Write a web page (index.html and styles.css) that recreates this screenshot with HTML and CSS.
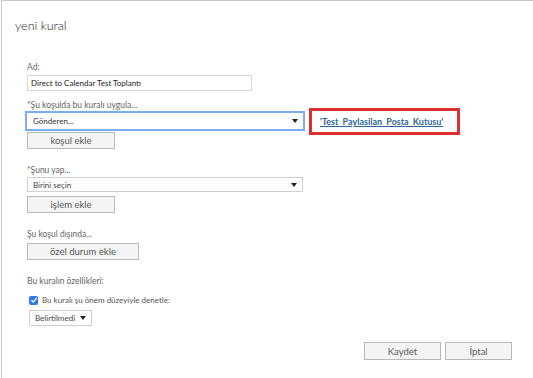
FILE: index.html
```html
<!DOCTYPE html>
<html lang="tr">
<head>
    <meta charset="UTF-8">
    <title>yeni kural</title>
    <link rel="stylesheet" href="styles.css">
</head>
<body>
    <div class="dialog">
        <h1 class="title">yeni kural</h1>

        <div class="form">
            <div class="field field-name">
                <label class="label">Ad:</label>
                <div class="input name-input">Direct to Calendar Test Toplantı</div>
            </div>

            <div class="field">
                <label class="label">*Şu koşulda bu kuralı uygula...</label>
                <div class="cond-row">
                    <div class="select select-focus">
                        <span>Gönderen...</span>
                        <span class="arrow"></span>
                    </div>
                    <div class="highlight">
                        <a class="link" href="#">'Test_Paylasilan_Posta_Kutusu'</a>
                    </div>
                </div>
                <button class="btn btn-small">koşul ekle</button>
            </div>

            <div class="field">
                <label class="label">*Şunu yap...</label>
                <div class="select select-wide">
                    <span>Birini seçin</span>
                    <span class="arrow"></span>
                </div>
                <button class="btn btn-small btn-gap">işlem ekle</button>
            </div>

            <div class="field">
                <label class="label">Şu koşul dışında...</label>
                <button class="btn btn-medium">özel durum ekle</button>
            </div>

            <div class="field">
                <label class="label">Bu kuralın özellikleri:</label>
                <label class="check">
                    <span class="checkbox">
                        <svg width="8" height="8" viewBox="0 0 8 8"><path d="M1.3 4.2 L3.2 6 L6.8 1.8" fill="none" stroke="#fff" stroke-width="1.3"/></svg>
                    </span>
                    Bu kuralı şu önem düzeyiyle denetle:
                </label>
                <div class="select select-small">
                    <span>Belirtilmedi</span>
                    <span class="arrow"></span>
                </div>
            </div>
        </div>

        <div class="footer">
            <button class="btn btn-footer">Kaydet</button>
            <button class="btn btn-footer btn-cancel">İptal</button>
        </div>
    </div>
</body>
</html>
```

FILE: styles.css
```css
* { margin: 0; padding: 0; box-sizing: border-box; }
body {
    font-family: Lato, "Open Sans", sans-serif;
    background: #ffffff;
    color: #333333;
    width: 533px;
    height: 378px;
    overflow: hidden;
}
.dialog {
    width: 532px;
    height: 378px;
    border-top: 1px solid #c6c6c6;
    border-left: 1px solid #c6c6c6;
    margin-left: 1px;
    padding: 15px 21px 22px 13px;
    display: flex;
    flex-direction: column;
}
.title {
    font-size: 12.5px;
    font-weight: 300;
    color: #222222;
    line-height: 20px;
}
.form {
    padding: 26px 0 0 12px;
}
.field {
    margin-bottom: 16px;
}
.field-name {
    margin-bottom: 9px;
}
.label {
    display: block;
    font-size: 8.5px;
    color: #666666;
    line-height: 11px;
    margin-bottom: 1px;
}
.field-name .label {
    margin-bottom: 2px;
}
.input {
    height: 16px;
    border: 1px solid #d6d6d6;
    font-size: 8px;
    line-height: 14px;
    padding-left: 3px;
    color: #222222;
}
.name-input {
    width: 225px;
}
.cond-row {
    display: flex;
    align-items: flex-start;
    margin-left: -2px;
    margin-top: -1px;
}
.select {
    display: flex;
    justify-content: space-between;
    align-items: center;
    height: 15px;
    border: 1px solid #d0d0d0;
    font-size: 8px;
    color: #444444;
    padding: 0 5px 0 5px;
}
.select-focus {
    width: 280px;
    height: 20px;
    border: 2px solid #7aaef0;
    padding-left: 6px;
    color: #333333;
}
.select-wide {
    width: 276px;
}
.select-small {
    width: 63px;
    height: 16px;
    margin: 5px 0 0 2px;
}
.arrow {
    width: 0;
    height: 0;
    border-left: 3px solid transparent;
    border-right: 3px solid transparent;
    border-top: 4px solid #222222;
}
.highlight {
    margin: -3px 0 -4px 4px;
    width: 151px;
    height: 27px;
    border: 3px solid #dc2f2f;
    display: flex;
    align-items: center;
    padding-left: 8px;
}
.link {
    font-size: 9px;
    font-weight: 700;
    color: #2c6894;
    text-decoration: underline;
}
.btn {
    display: block;
    height: 17px;
    background: #f4f4f4;
    border: 1px solid #b9b9b9;
    font-family: inherit;
    font-size: 9.5px;
    font-weight: 400;
    color: #5a5a5a;
    margin-top: 1px;
}
.btn-gap {
    margin-top: 4px;
}
.btn-small {
    width: 88px;
}
.btn-medium {
    width: 112px;
    margin-top: 3px;
}
.check {
    display: flex;
    align-items: center;
    gap: 4px;
    font-size: 8px;
    color: #555555;
    margin: 8px 0 0 2px;
}
.checkbox {
    width: 9px;
    height: 9px;
    background: #2f7ae5;
    border-radius: 2px;
    display: flex;
    align-items: center;
    justify-content: center;
}
.footer {
    margin-top: auto;
    display: flex;
    justify-content: flex-end;
    gap: 4px;
}
.btn-footer {
    width: 77px;
    height: 18px;
    margin: 0;
}
.btn-cancel {
    width: 67px;
}
```
